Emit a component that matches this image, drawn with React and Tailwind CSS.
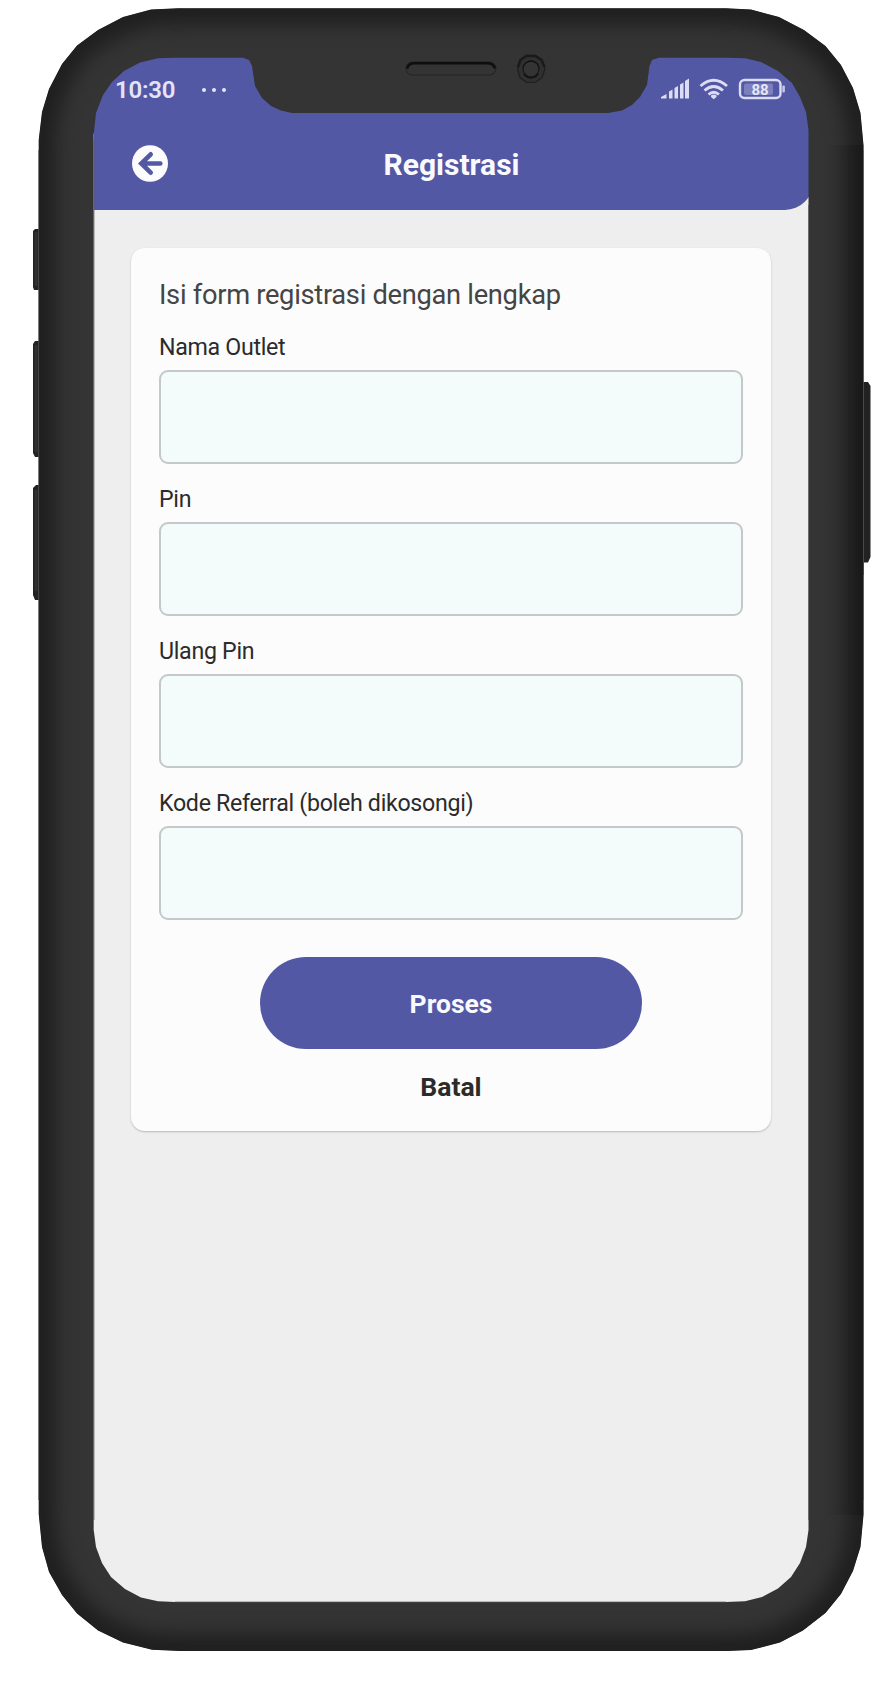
const OUTER =
  "M38.7 140L42 112L49 89L62 64L77 45.5L98 30L123 17L151 9.5L178 8.2H726L751 9.5L779 17L804 30L825.5 46L841 65L853 88L860.5 113L863.5 145V1515L860.5 1547L853 1571L841 1594L825.5 1613L803 1630.500L780 1642.500L751 1650L727 1651H180L152 1649.800L123 1642.500L98 1630.500L77 1613.500L62 1595L49 1572L42 1547L38.700 1514Z";
const INNER =
  "M93.700 135L96 113L103 95L112 82L124 71L140 62.500L158 58.300L175 57.700H243L249 60L252 66L255 86L262 98L271 106L281 110.500L292 113H608L622 110.500L632 105L640 97L647 85L649.500 66L652 60L659 57.700H727L745 58.300L761 62L778 71L792 83L800 97L806 112L808.500 130V1530L806 1547L800 1563L791 1577L778 1588.500L762 1597L745 1601.300L726 1602H175L158 1601.300L141 1597.500L125 1589L111 1577L102 1563L96 1547L93.700 1530Z";

function Bezel() {
  return (
    <svg className="pointer-events-none absolute inset-0" width="880" height="1700" viewBox="0 0 880 1700" aria-hidden="true">
      <defs>
        <clipPath id="frame">
          <path d={OUTER + INNER} clipRule="evenodd" />
        </clipPath>
        <filter id="soft" x="-5%" y="-5%" width="110%" height="110%" colorInterpolationFilters="sRGB">
          <feGaussianBlur stdDeviation="10" />
        </filter>
        <linearGradient id="slot" x1="0" y1="0" x2="0" y2="1">
          <stop offset="0" stopColor="#0c0c0c" />
          <stop offset="1" stopColor="#222222" />
        </linearGradient>
        <linearGradient id="sideShade" x1="0" y1="0" x2="1" y2="0">
          <stop offset="0" stopColor="#000" stopOpacity="0" />
          <stop offset="1" stopColor="#000" stopOpacity="0.2" />
        </linearGradient>
      </defs>
      <g fill="#222222">
        <path d="M39 229H35L33 231V287L34 290H39Z" />
        <path d="M39 341H35L33 344V453L35 457H39Z" />
        <path d="M39 485H36L33 488V595L35 600H39Z" />
        <path d="M863 382H868L870.500 386V557L868 562.500H864V575H863Z" />
      </g>
      <path d="M36 232V286M36 345V452M36 490V591" stroke="#303030" strokeWidth="3" />
      <g clipPath="url(#frame)">
        <path d={OUTER} fill="#343434" />
        <path d={OUTER} fill="none" stroke="#1e1e1e" strokeWidth="32" filter="url(#soft)" />
        <rect x="824" y="145" width="40" height="1370" fill="url(#sideShade)" />
      </g>
      <path d="M38.600 150V1500M863.500 150V1500M94 140V1520M808.500 205V1520M175 1602H726" stroke="#5a5a5a" strokeWidth="0.700" fill="none" />
      <rect x="406" y="62" width="90" height="13" rx="6.500" fill="#343434" stroke="#222222" strokeWidth="1" />
      <path d="M407 68.500Q409 63.300 414 63.300H488Q493 63.300 495 68.500" fill="none" stroke="#0e0e0e" strokeWidth="2.400" />
      <path d="M526.500 55.500H535.500L542 60L545 69L542 77.500L535.500 82.300H526.500L520 77.500L517.500 69L520 60Z" fill="#303030" stroke="#202020" strokeWidth="1.300" />
      <path d="M518 67L520.500 60L526.500 56H535.500L541.500 60L544.500 67" fill="none" stroke="#1a1a1a" strokeWidth="2.500" />
      <circle cx="531" cy="69" r="8" fill="#343434" stroke="url(#slot)" strokeWidth="1.400" />
      <path d="M524 73.500A8 8 0 0 0 538 73.500" fill="none" stroke="#141414" strokeWidth="2" />
    </svg>
  );
}

function StatusIcons() {
  return (
    <svg width="126" height="24" viewBox="660 77 126 24" fill="none" stroke="#dcdcf3" aria-hidden="true">
      <path d="M661 98.500V97L666.500 94V98.500ZM669 98.500V91.500L672.500 89.500V98.500ZM674.500 98.500V88L678 86V98.500ZM680 98.500V84.500L683.500 82.500V98.500ZM685 98.500V81L689 78.500V98.500Z" fill="#dcdcf3" stroke="none" />
      <path d="M700.500 86Q713.700 74.500 727 86M704.500 90.500Q713.700 82.500 723 90.500M708.500 94.500Q713.700 90 719 94.500" strokeWidth="2.800" />
      <path d="M713.700 99.200L711 97V95.500Q713.700 93.500 716.500 95.500V97Z" fill="#dcdcf3" stroke="none" />
      <rect x="740" y="80" width="40.500" height="18" rx="4.500" strokeWidth="2.400" />
      <rect x="744" y="83.500" width="29" height="11.500" rx="2" fill="#7a7fbe" stroke="none" />
      <rect x="782.300" y="85.500" width="2.600" height="7" rx="1" fill="#c3c5e6" stroke="none" />
      <text x="760" y="94.500" textAnchor="middle" fontFamily="Roboto, sans-serif" fontWeight="700" fontSize="15" fill="#e6e6f6" stroke="none">88</text>
    </svg>
  );
}

function BackIcon() {
  return (
    <svg width="36" height="37" viewBox="0 0 36 37" aria-hidden="true">
      <ellipse cx="18" cy="18.500" rx="18" ry="18.300" fill="#fcfcfe" />
      <path d="M18.700 9.300L9.300 18.500L18.700 27.700M10 18.500H28.300" stroke="#5358a4" strokeWidth="4.600" strokeLinecap="round" strokeLinejoin="miter" fill="none" />
    </svg>
  );
}

function Field({ label }) {
  return (
    <label className="flex h-[152px] flex-col text-[23.2px] leading-[26px] tracking-[-0.3px] text-[#2b2b2b]">
      <span className="h-[36px]">{label}</span>
      <input className="h-[94px] w-full rounded-[9px] border-2 border-[#c4c8c8] bg-[#f3fcfb] px-4 outline-none" />
    </label>
  );
}

const FIELDS = ["Nama Outlet", "Pin", "Ulang Pin", "Kode Referral (boleh dikosongi)"];

export default function App() {
  return (
    <div className="relative h-[1700px] w-[880px] overflow-hidden bg-white pt-[57px] pl-[94px] font-['Roboto',sans-serif]">
      <main className="flex h-[1545px] w-[715px] flex-col overflow-hidden bg-[#eeeeee]">
        <header className="h-[153px] w-[719px] shrink-0 rounded-br-[28px] bg-[#5358a4]">
          <div className="flex h-[64px] items-center pt-[1px] pl-[21px]">
            <span className="w-[87px] text-[24px] font-semibold tracking-[-0.2px] text-[#e4e4f6]">10:30</span>
            <span className="flex gap-[6px]">
              <i className="size-[4px] rounded-full bg-[#e4e4f6]" />
              <i className="size-[4px] rounded-full bg-[#e4e4f6]" />
              <i className="size-[4px] rounded-full bg-[#e4e4f6]" />
            </span>
            <span className="mr-[27px] mb-[1px] ml-auto"><StatusIcons /></span>
          </div>
          <div className="grid w-[715px] grid-cols-[36px_1fr_36px] items-center px-[37.500px] pt-[24px]">
            <button type="button" aria-label="Kembali"><BackIcon /></button>
            <h1 className="pt-[2px] text-center text-[30px] leading-[34px] font-bold text-[#fafafe]">Registrasi</h1>
          </div>
        </header>
        <section className="mx-[37px] mt-[38px] flex h-[883px] w-[640px] shrink-0 flex-col rounded-[14px] bg-[#fcfcfc] px-[28px] pt-[30px] shadow-[0_1px_2px_rgba(0,0,0,0.22)]">
          <h2 className="h-[56px] text-[27.300px] leading-[34px] tracking-[-0.3px] text-[#454545]">Isi form registrasi dengan lengkap</h2>
          {FIELDS.map((label) => (
            <Field key={label} label={label} />
          ))}
          <button type="button" className="mt-[15px] h-[92px] w-[382px] shrink-0 self-center rounded-full bg-[#5358a4] pt-[2px] text-[26.500px] font-bold text-[#fafafe]">
            Proses
          </button>
          <button type="button" className="mt-[22px] self-center text-[26.500px] leading-[32px] font-bold text-[#2b2b2b]">
            Batal
          </button>
        </section>
      </main>
      <Bezel />
    </div>
  );
}
